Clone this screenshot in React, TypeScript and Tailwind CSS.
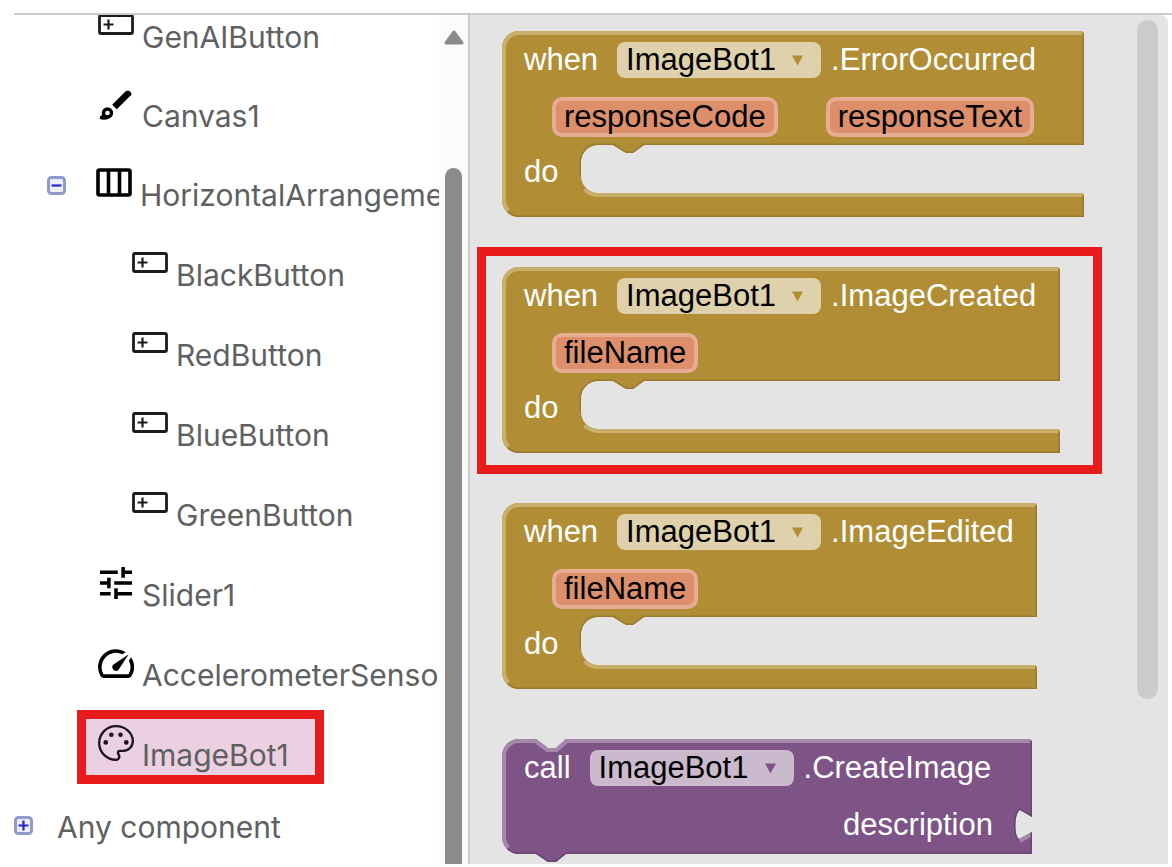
import { useId, type ReactNode } from "react";

const ButtonIcon = () => (
  <svg className="h-[22px] w-9" viewBox="0 0 36 22" fill="none" stroke="#1c1c1c">
    <rect x="1.5" y="1.5" width="33" height="18" rx="1.5" strokeWidth="2.8" />
    <path d="M5.5 10.5h10M10.5 5.5v10" strokeWidth="2.2" />
  </svg>
);

const BrushIcon = () => (
  <svg className="size-9" viewBox="0 0 36 36" fill="none" stroke="#000">
    <path d="M16.500 21L30.500 7" strokeWidth="6.500" />
    <path d="M30 6.500l1.500 1.500" strokeWidth="4" strokeLinecap="round" />
    <circle cx="9.500" cy="27" r="4" strokeWidth="3.400" />
    <path d="M2 31.500c2 0 3.500-1.500 3.500-4.500M2 31.500c3 1.500 6 1 8 0" strokeWidth="2.600" />
  </svg>
);

const ColumnsIcon = () => (
  <svg className="h-[30px] w-9" viewBox="0 0 36 30" fill="none" stroke="#000" strokeWidth="3.6">
    <rect x="2" y="2" width="32" height="25" rx="1.5" />
    <path d="M12.500 2v25M23.500 2v25" />
  </svg>
);

const TuneIcon = () => (
  <svg className="h-8 w-9" viewBox="3 3 18 18">
    <path d="M3 17v2h6v-2H3zM3 5v2h10V5H3zm10 16v-2h8v-2h-8v-2h-2v6h2zM7 9v2H3v2h4v2h2V9H7zm14 4v-2H11v2h10zm-6-4h2V7h4V5h-4V3h-2v6z" />
  </svg>
);

const GaugeIcon = () => (
  <svg className="h-[29px] w-9" viewBox="2 4 20 16">
    <path d="m20.380 8.570-1.230 1.850a8 8 0 0 1-.22 7.580H5.070A8 8 0 0 1 15.580 6.850l1.850-1.230A10 10 0 0 0 3.350 19a2 2 0 0 0 1.720 1h13.850a2 2 0 0 0 1.740-1 10 10 0 0 0-.27-10.440zm-9.790 6.840a2 2 0 0 0 2.830 0l5.660-8.490-8.490 5.660a2 2 0 0 0 0 2.830z" />
  </svg>
);

const PaletteIcon = () => (
  <svg className="size-9" viewBox="2 2 20 20" fill="#1c1420">
    <path
      d="M12 21.350C6.840 21.350 2.650 17.160 2.650 12S6.840 2.650 12 2.650s9.350 3.750 9.350 8.350c0 2.950-2.400 5.350-5.350 5.350h-1.770c-.64 0-1.150.51-1.150 1.150 0 .29.11.55.29.76.3.34.48.78.48 1.240 0 1.020-.83 1.850-1.850 1.850z"
      fill="none"
      stroke="#1c1420"
      strokeWidth="1.300"
    />
    <circle cx="6.300" cy="11.700" r="1.300" />
    <circle cx="9.400" cy="7.400" r="1.300" />
    <circle cx="14.500" cy="7.400" r="1.300" />
    <circle cx="17.700" cy="11.700" r="1.300" />
  </svg>
);

function Toggle({ open, label }: { open: boolean; label: string }) {
  return (
    <button type="button" aria-label={label} aria-expanded={open} className="shrink-0 pb-1">
      <svg className="size-[19px]" viewBox="0 0 19 19" fill="none">
        <rect x="1.500" y="1.500" width="16" height="16" rx="3" fill="#eeeef6" stroke="#8f9ccb" strokeWidth="3" />
        <path d={open ? "M4.500 9.500h10" : "M4.500 9.500h10M9.500 4.500v10"} stroke="#2a22d0" strokeWidth="2.200" />
      </svg>
    </button>
  );
}

function TreeRow({ icon, name, className, toggle }: { icon: ReactNode; name: string; className: string; toggle?: ReactNode }) {
  return (
    <li className={`flex items-center ${className}`}>
      {toggle}
      <button type="button" className="flex shrink-0 items-center gap-2 whitespace-nowrap">
        <span className="pb-2">{icon}</span>
        <span className="pt-4">{name}</span>
      </button>
    </li>
  );
}

function ComponentTree() {
  return (
    <nav aria-label="Components" className="flex w-[454px] shrink-0 overflow-hidden">
      <ul className="-mt-[26px] min-w-0 flex-1 overflow-hidden text-[30px] leading-10 text-[#5f6062]">
        <TreeRow className="h-[79px] pl-[84px]" icon={<ButtonIcon />} name="GenAIButton" />
        <TreeRow className="h-[79px] pl-[84px]" icon={<BrushIcon />} name="Canvas1" />
        <TreeRow
          className="h-20 gap-[30px] pl-[33px]"
          toggle={<Toggle open label="Collapse HorizontalArrangement1" />}
          icon={<ColumnsIcon />}
          name="HorizontalArrangement1"
        />
        <TreeRow className="h-20 pl-[118px]" icon={<ButtonIcon />} name="BlackButton" />
        <TreeRow className="h-20 pl-[118px]" icon={<ButtonIcon />} name="RedButton" />
        <TreeRow className="h-20 pl-[118px]" icon={<ButtonIcon />} name="BlueButton" />
        <TreeRow className="h-20 pl-[118px]" icon={<ButtonIcon />} name="GreenButton" />
        <TreeRow className="h-20 pl-[84px]" icon={<TuneIcon />} name="Slider1" />
        <TreeRow className="h-20 pl-[84px]" icon={<GaugeIcon />} name="AccelerometerSensor1" />
        <li className="flex h-20 items-center pl-[63px]">
          <button
            type="button"
            aria-current="true"
            className="flex h-[74px] w-[247px] items-center gap-2 border-[9px] border-[#e71b1b] bg-[#ebd0e1] pl-3"
          >
            <span className="pb-2">
              <PaletteIcon />
            </span>
            <span className="pt-4">ImageBot1</span>
          </button>
        </li>
        <li className="flex h-20 items-center gap-6">
          <Toggle open={false} label="Expand Any component" />
          <span className="whitespace-nowrap">Any component</span>
        </li>
      </ul>
      <div className="flex w-[29px] shrink-0 flex-col items-center bg-[#fbfbfb] pt-[15px]">
        <svg className="h-[15px] w-5" viewBox="0 0 20 15">
          <path d="M10 2L18 13H2z" fill="#8b8b8b" stroke="#8b8b8b" strokeWidth="3" strokeLinejoin="round" />
        </svg>
        <div className="mt-[123px] w-[17px] flex-1 rounded-t-full bg-[#8b8b8b]" />
      </div>
    </nav>
  );
}

interface Outline {
  shape: string;
  light: string;
  dark: string;
}

const eventOutline = (w: number): Outline => ({
  shape: `M17 0H${w - 2}L${w} 2V114H142L131 122H124L111 114H96A17 17 0 0 0 79 131V145A17 17 0 0 0 96 162H${w - 2}L${w} 164V186H17A17 17 0 0 1 0 169V17A17 17 0 0 1 17 0Z`,
  light: `M5 181A17 17 0 0 1 0 169V17A17 17 0 0 1 17 0H${w - 2}M84 157A17 17 0 0 0 96 162H${w - 2}`,
  dark: `M${w} 3V114H142L131 122H124L111 114H96A17 17 0 0 0 79 131V145M${w} 165V186H17A17 17 0 0 1 5 181`,
});

const callOutline = (w: number): Outline => ({
  shape: `M17 0H34L46 9H54L64 0H${w - 2}L${w} 2V78L${w - 12} 71C${w - 18} 74 ${w - 18} 97 ${w - 13} 100L${w} 93V115H64L54 123H46L34 115H17A17 17 0 0 1 0 98V17A17 17 0 0 1 17 0Z`,
  light: `M5 110A17 17 0 0 1 0 98V17A17 17 0 0 1 17 0H34L46 9H54L64 0H${w - 2}M${w - 13} 100L${w} 93`,
  dark: `M${w} 3V78L${w - 12} 71C${w - 18} 74 ${w - 18} 97 ${w - 13} 100M${w} 93V115H64L54 123H46L34 115H17A17 17 0 0 1 5 110`,
});

function BlockShape({ outline, fill, light, dark }: { outline: Outline; fill: string; light: string; dark: string }) {
  const id = useId();
  return (
    <svg className="absolute inset-0 size-full overflow-visible" aria-hidden="true">
      <clipPath id={id}>
        <path d={outline.shape} />
      </clipPath>
      <path d={outline.shape} fill={fill} />
      <g clipPath={`url(#${id})`} fill="none">
        <path d={outline.light} stroke={light} strokeWidth="8" />
        <path d={outline.dark} stroke={dark} strokeWidth="3" />
      </g>
    </svg>
  );
}

function ComponentField({ className, caret }: { className: string; caret: string }) {
  return (
    <span className="relative flex items-center">
      <select aria-label="Component" className={`h-9 appearance-none rounded-lg pr-[45px] pl-[9px] text-black ${className}`}>
        <option>ImageBot1</option>
      </select>
      <svg className="pointer-events-none absolute right-[18px] h-[11px] w-[11px]" viewBox="0 0 12 11">
        <path d="M0 0H12L6 11z" fill={caret} />
      </svg>
    </span>
  );
}

function EventBlock({ width, event, params, highlighted }: { width: number; event: string; params: string[]; highlighted?: boolean }) {
  return (
    <section className="relative h-[186px]" style={{ width }}>
      <BlockShape outline={eventOutline(width)} fill="#b18e35" light="#c8b06c" dark="#98792f" />
      <div className="relative pl-[22px]">
        <div className="flex h-[58px] items-center">
          <span className="mr-[19px]">when</span>
          <ComponentField className="bg-[#dfd1ac]" caret="#b18e35" />
          <span className="ml-[10px]">.{event}</span>
        </div>
        <div className="flex h-14 items-center gap-12 pl-7">
          {params.map((p) => (
            <span key={p} className="flex h-10 items-center rounded-[10px] border-4 border-[#e8ab94] bg-[#dd8f6c] px-2 text-black">
              {p}
            </span>
          ))}
        </div>
        <div className="flex h-[54px] items-center">do</div>
      </div>
      {highlighted && <div className="absolute -top-[20px] -right-[42px] -bottom-[21px] -left-[25px] border-[9px] border-[#e71b1b]" />}
    </section>
  );
}

function CallBlock({ width, method, argument }: { width: number; method: string; argument: string }) {
  return (
    <section className="relative h-[115px] shrink-0" style={{ width }}>
      <BlockShape outline={callOutline(width)} fill="#7d5485" light="#a588aa" dark="#6b4673" />
      <div className="relative pr-[39px] pl-[22px]">
        <div className="flex h-[58px] items-center">
          <span className="mr-[19px]">call</span>
          <ComponentField className="bg-[#cbbace]" caret="#7d5485" />
          <span className="ml-[10px]">.{method}</span>
        </div>
        <div className="flex h-14 items-center justify-end">{argument}</div>
      </div>
    </section>
  );
}

export default function App() {
  return (
    <div className="flex h-screen flex-col bg-white pt-[13px] pr-1 pb-[3px] pl-[14px] font-['Inter',sans-serif]">
      <div className="-mr-1 h-[2px] shrink-0 bg-[#cbcbcb]" />
      <div className="flex min-h-0 flex-1">
        <ComponentTree />
        <main className="flex min-w-0 flex-1 overflow-hidden rounded-tr-lg border-l-2 border-[#cbcbcb] bg-[#e4e4e4]">
          <div className="flex min-w-0 flex-1 flex-col gap-[50px] overflow-hidden pt-4 pl-8 font-['Liberation_Sans',sans-serif] text-[31px] leading-9 whitespace-nowrap text-white">
            <EventBlock width={582} event="ErrorOccurred" params={["responseCode", "responseText"]} />
            <EventBlock width={558} event="ImageCreated" params={["fileName"]} highlighted />
            <EventBlock width={535} event="ImageEdited" params={["fileName"]} />
            <CallBlock width={530} method="CreateImage" argument="description" />
          </div>
          <div className="mt-[5px] mr-[10px] h-4/5 w-[21px] shrink-0 rounded-full bg-[#cbcbcb]" />
        </main>
      </div>
    </div>
  );
}
